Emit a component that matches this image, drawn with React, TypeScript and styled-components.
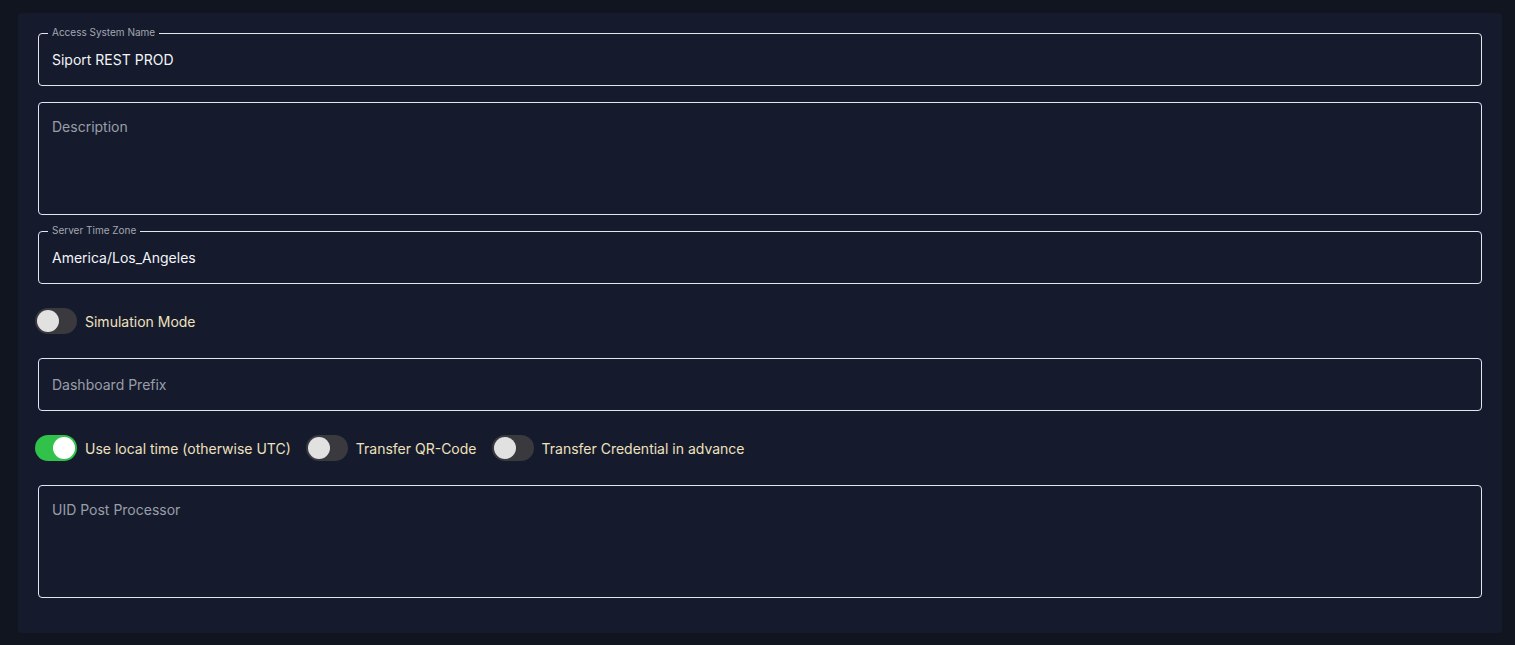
import React from "react";
import styled, { createGlobalStyle } from "styled-components";

const GlobalStyle = createGlobalStyle`
  html, body {
    margin: 0;
    padding: 0;
    background: #10151f;
    font-family: Inter, "Noto Sans", sans-serif;
  }
`;

const Page = styled.div`
  min-height: 645px;
  box-sizing: border-box;
  padding: 13px 13px 12px 18px;
`;

const Card = styled.div`
  background: #151b2d;
  border-radius: 4px;
  padding: 20px 20px 35px;
  display: flex;
  flex-direction: column;
  gap: 16px;
`;

const Field = styled.div<{ multiline?: boolean }>`
  position: relative;
  box-sizing: border-box;
  height: ${(p) => (p.multiline ? "113px" : "53px")};
  border: 1px solid #e4e6eb;
  border-radius: 4px;
  padding: ${(p) => (p.multiline ? "15px 13px" : "0 13px")};
  display: flex;
  align-items: ${(p) => (p.multiline ? "flex-start" : "center")};
`;

const Notch = styled.span`
  position: absolute;
  top: -8px;
  left: 9px;
  padding: 0 4px;
  background: #151b2d;
  color: #a3a7b1;
  font-size: 10px;
  line-height: 12px;
`;

const Value = styled.span<{ placeholder?: boolean }>`
  font-size: 14px;
  line-height: 18px;
  color: ${(p) => (p.placeholder ? "#9a9ea8" : "#f3f4f6")};
`;

const SwitchRow = styled.div`
  height: 42px;
  display: flex;
  align-items: center;
  gap: 15px;
  margin-left: -3px;
`;

const SwitchItem = styled.label`
  display: flex;
  align-items: center;
  gap: 8px;
`;

const Track = styled.span<{ on?: boolean }>`
  width: 42px;
  height: 26px;
  border-radius: 13px;
  background: ${(p) => (p.on ? "#30c24b" : "#39393e")};
  display: flex;
  align-items: center;
  justify-content: ${(p) => (p.on ? "flex-end" : "flex-start")};
  padding: 0 2px;
  box-sizing: border-box;
`;

const Thumb = styled.span<{ on?: boolean }>`
  width: 22px;
  height: 22px;
  border-radius: 50%;
  background: ${(p) => (p.on ? "#ffffff" : "#e1e1e1")};
`;

const SwitchLabel = styled.span`
  font-size: 14px;
  color: #efe1bd;
`;

const Toggle: React.FC<{ on?: boolean; label: string }> = ({ on, label }) => (
  <SwitchItem>
    <Track on={on}>
      <Thumb on={on} />
    </Track>
    <SwitchLabel>{label}</SwitchLabel>
  </SwitchItem>
);

export default function App() {
  return (
    <Page>
      <GlobalStyle />
      <Card>
        <Field>
          <Notch>Access System Name</Notch>
          <Value>Siport REST PROD</Value>
        </Field>
        <Field multiline>
          <Value placeholder>Description</Value>
        </Field>
        <Field>
          <Notch>Server Time Zone</Notch>
          <Value>America/Los_Angeles</Value>
        </Field>
        <SwitchRow>
          <Toggle label="Simulation Mode" />
        </SwitchRow>
        <Field>
          <Value placeholder>Dashboard Prefix</Value>
        </Field>
        <SwitchRow>
          <Toggle on label="Use local time (otherwise UTC)" />
          <Toggle label="Transfer QR-Code" />
          <Toggle label="Transfer Credential in advance" />
        </SwitchRow>
        <Field multiline>
          <Value placeholder>UID Post Processor</Value>
        </Field>
      </Card>
    </Page>
  );
}
